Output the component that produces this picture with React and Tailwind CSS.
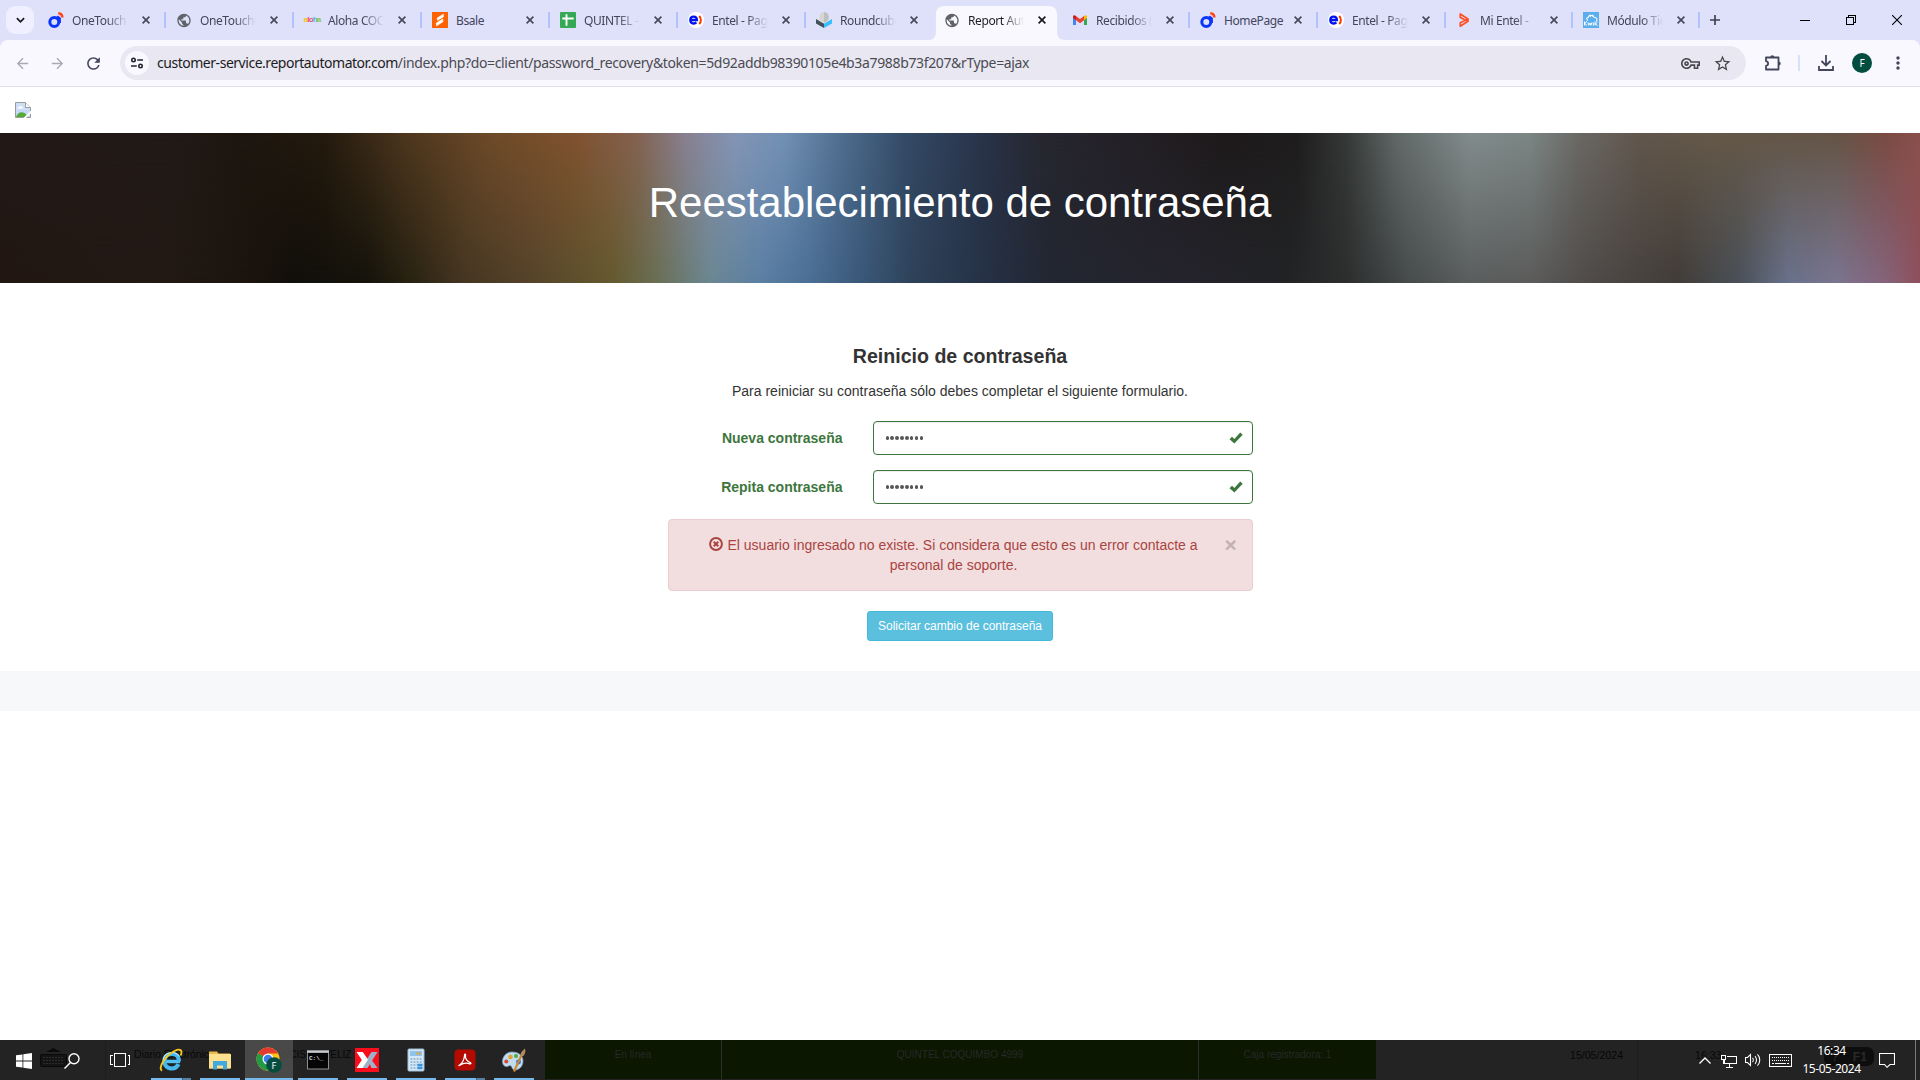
import React from "react";
import {
  MdPublic,
  MdArrowBack,
  MdArrowForward,
  MdRefresh,
  MdStarBorder,
  MdMoreVert,
  MdOutlineVpnKey,
} from "react-icons/md";

/* ---------- favicons ---------- */

const OneTouchIcon = () => (
  <svg viewBox="0 0 16 16" className="size-4">
    <circle cx="6.3" cy="10" r="4.5" fill="none" stroke="#0a36ff" strokeWidth="3" />
    <path d="M9.2 4.2l2.6 2.4V11" fill="none" stroke="#0a36ff" strokeWidth="2.2" />
    <path d="M10.3 1.3c2.4.1 4 1.700 4 4.300" fill="none" stroke="#ff4415" strokeWidth="2.600" />
  </svg>
);

const GlobeIcon = () => <MdPublic className="size-[17px] text-[#5f6368]" />;

const AlohaIcon = () => (
  <span className="flex w-4 justify-center font-['Liberation_Sans'] text-[8px] font-bold leading-none tracking-[-0.9px]">
    <span className="text-[#f5c400]">a</span>
    <span className="text-[#ee3d8f]">l</span>
    <span className="text-[#e8506a]">o</span>
    <span className="text-[#36b5d8]">h</span>
    <span className="text-[#8cc63f]">a</span>
  </span>
);

const BsaleIcon = () => (
  <svg viewBox="0 0 16 16" className="size-4">
    <rect width="16" height="16" fill="#ff6200" />
    <path d="M5.200 6.100L11.300 2.300v2.600L5.600 8.200zM4.200 11.200l6.500-4.100.3 2.500-6.300 4.200z" fill="#fff" stroke="#fff" strokeWidth=".8" strokeLinejoin="round" />
  </svg>
);

const SheetIcon = () => (
  <svg viewBox="0 0 16 16" className="size-4">
    <rect width="16" height="16" rx="1" fill="#34a853" />
    <path d="M2.300 6.500h11.400M6.500 2.300v11.400" stroke="#fff" strokeWidth="1.900" />
  </svg>
);

const EntelIcon = () => (
  <svg viewBox="0 0 16 16" className="size-4">
    <circle cx="8" cy="8" r="8" fill="#fff" />
    <path d="M2.300 8h6.600c0-4.500-6.600-4.500-6.600 0 0 4 4.400 4.200 6.100 2.400" fill="none" stroke="#0014f0" strokeWidth="2.300" />
    <path d="M11.300 4c2 2.300 2 5.700 0 8" fill="none" stroke="#ff3d00" strokeWidth="2.100" />
  </svg>
);

const RoundcubeIcon = () => (
  <svg viewBox="0 0 16 16" className="size-4">
    <path d="M0 7l8 4.500V16L0 11.400z" fill="#43515a" />
    <path d="M16 7l-8 4.500V16l8-4.600z" fill="#37beff" />
    <path d="M3 5.500v3.200l5 2.800 5-2.800V5.500z" fill="#e5e5e5" />
    <ellipse cx="8" cy="5.200" rx="4.800" ry="5.200" fill="#d5d5d5" />
    <path d="M8 0a4.800 5.200 0 0 1 0 10.400z" fill="#bfbfbf" />
  </svg>
);

const GmailIcon = () => (
  <svg viewBox="0 0 16 16" className="size-4">
    <path d="M1 4.500v8.600h3V7.300z" fill="#4285f4" />
    <path d="M12 7.300v5.800h3V4.500z" fill="#34a853" />
    <path d="M4 4v4.200l4 3 4-3V4L8 7z" fill="#ea4335" />
    <path d="M1 4.500V6l3 2.200V4C2.500 2.500 1 3.300 1 4.500z" fill="#c5221f" />
    <path d="M15 4.500V6l-3 2.200V4c1.500-1.500 3-.7 3 .5z" fill="#fbbc04" />
  </svg>
);

const MiEntelIcon = () => (
  <svg viewBox="0 0 16 16" className="size-4" fill="none" stroke="#ff4f23" strokeWidth="1.700" strokeLinejoin="round">
    <path d="M4.300 2v3.400L12 9.200V7L4.300 2zM4.300 14.200v-3.400L12 7v2.300z" />
  </svg>
);

const KwikIcon = () => (
  <svg viewBox="0 0 16 16" className="size-4">
    <rect width="16" height="16" fill="#5aaeee" />
    <path d="M5 8.500C3 7.500 3.500 5 5.500 5.200 6 2.700 9 2.700 9.800 4.500M6 3l2 1.500M9.500 2.800l1.500 2.500c3 0 4 3 2 4.200" fill="none" stroke="#fff" strokeWidth="1.100" />
    <path d="M1.500 9.500v4M4 9.500l-2.300 2L4 13.500M5 10.500l.8 2.800L7 11l1 2.300.9-2.800M10.300 10.500v3M12 9.500v4M14.500 10.300L12.300 12l2.300 1.500" fill="none" stroke="#fff" strokeWidth="1" />
  </svg>
);

/* ---------- tab strip ---------- */

const CloseX = ({ active }) => (
  <svg viewBox="0 0 8 8" className={active ? "size-2 text-[#16171c]" : "size-2 text-[#45485a]"}>
    <path d="M.6.600l6.800 6.800M7.400.6L.6 7.400" stroke="currentColor" strokeWidth="1.600" />
  </svg>
);

const tabs = [
  { icon: OneTouchIcon, title: "OneTouch" },
  { icon: GlobeIcon, title: "OneTouchC" },
  { icon: AlohaIcon, title: "Aloha COC" },
  { icon: BsaleIcon, title: "Bsale", whole: true },
  { icon: SheetIcon, title: "QUINTEL -" },
  { icon: EntelIcon, title: "Entel - Pag" },
  { icon: RoundcubeIcon, title: "Roundcube" },
  { icon: GlobeIcon, title: "Report Aut", active: true },
  { icon: GmailIcon, title: "Recibidos (" },
  { icon: OneTouchIcon, title: "HomePage", whole: true },
  { icon: EntelIcon, title: "Entel - Pag" },
  { icon: MiEntelIcon, title: "Mi Entel -", narrow: true },
  { icon: KwikIcon, title: "Módulo Tie", narrow: true },
];

function Tab({ tab, divider }) {
  const Icon = tab.icon;
  return (
    <div className={"relative flex h-10 shrink-0 items-center pl-[11px] " + (tab.narrow ? "w-[127px]" : "w-32")}>
      {tab.active && (
        <svg viewBox="0 0 140 34" className="absolute -left-[5px] bottom-0 h-[34px] w-[138px]" preserveAspectRatio="none">
          <path d="M0 34c6 0 8-3 8-9V9c0-6 3-9 9-9h105c6 0 9 3 9 9v16c0 6 2 9 9 9z" fill="#f9f8fe" />
        </svg>
      )}
      <span className="relative flex w-4 justify-center">
        <Icon />
      </span>
      <span
        className={
          "relative ml-2 overflow-hidden whitespace-nowrap pt-px text-[12px] leading-5 tracking-[-0.4px] " +
          (tab.whole ? "w-[62px] " : "w-[56px] [mask-image:linear-gradient(to_right,black_62%,transparent)] ") +
          (tab.active ? "text-[#1d1e24]" : "text-[#43465a]")
        }
      >
        {tab.title}
      </span>
      <span className="absolute left-[105px] top-4">
        <CloseX active={tab.active} />
      </span>
      {divider && <span className="absolute right-[-1px] top-3 h-4 w-[2px] bg-[#b3c2fc]" />}
    </div>
  );
}

function TabStrip() {
  return (
    <div className="flex h-10 bg-[#dfe0fa]">
      <div className="flex w-[37px] shrink-0 items-center">
        <div className="ml-1.5 flex size-7 items-center justify-center rounded-[9px] bg-[#efefff]">
          <svg viewBox="0 0 10 6" className="h-[6px] w-[9px]">
            <path d="M1 1l4 4 4-4" fill="none" stroke="#16171c" strokeWidth="1.900" />
          </svg>
        </div>
      </div>
      {tabs.map((t, i) => (
        <Tab key={i} tab={t} divider={i !== 6 && i !== 7} />
      ))}
      <div className="flex w-8 items-center justify-center">
        <svg viewBox="0 0 10 10" className="size-[10px]">
          <path d="M5 0v10M0 5h10" stroke="#3f4254" strokeWidth="1.700" />
        </svg>
      </div>
      <div className="ml-auto flex shrink-0">
        <div className="flex w-[46px] items-center justify-center">
          <span className="h-px w-[10px] bg-black" />
        </div>
        <div className="flex w-[46px] items-center justify-center">
          <svg viewBox="0 0 10 10" className="size-[10px]" fill="none" stroke="#000" shapeRendering="crispEdges">
            <path d="M.5 2.500h7v7h-7zM2.500 2.500v-2h7v7h-2" />
          </svg>
        </div>
        <div className="flex w-[46px] items-center justify-center">
          <svg viewBox="0 0 10 10" className="size-[10px]">
            <path d="M0 0l10 10M10 0L0 10" stroke="#000" strokeWidth="1.100" />
          </svg>
        </div>
      </div>
    </div>
  );
}

/* ---------- toolbar ---------- */

function Toolbar() {
  return (
    <div className="bg-[#dfe0fa]">
      <div className="flex h-[47px] items-center rounded-t-[8px] border-b border-[#dfdfea] bg-[#f9f8fe]">
        <div className="flex w-[120px] shrink-0 items-center">
          <MdArrowBack className="ml-[14px] size-[17px] text-[#a9aab4]" />
          <MdArrowForward className="ml-[18px] size-[17px] text-[#a9aab4]" />
          <MdRefresh className="ml-[18px] size-[19px] text-[#43465a]" />
        </div>
        <div className="flex h-[34px] w-[1626px] shrink-0 items-center rounded-full bg-[#e9e8f2] pl-[5px] pr-[14px]">
          <div className="flex size-6 items-center justify-center rounded-full bg-[#f9f8fe]">
            <svg viewBox="0 0 12 12" className="size-3" fill="none" stroke="#22242c" strokeWidth="1.600">
              <circle cx="2.500" cy="3" r="1.700" />
              <path d="M6.200 3H12M0 9h5.800" />
              <circle cx="9.500" cy="9" r="1.700" />
            </svg>
          </div>
          <span className="ml-2 whitespace-nowrap text-[14px] leading-5 tracking-[-0.355px] text-[#4b4b53]">
            <span className="tracking-[-0.47px] text-[#1c1c22]">customer-service.reportautomator.com</span>
            /index.php?do=client/password_recovery&amp;token=5d92addb98390105e4b3a7988b73f207&amp;rType=ajax
          </span>
          <MdOutlineVpnKey className="ml-auto size-[19px] text-[#47474f]" />
          <MdStarBorder className="ml-[13px] size-[19px] text-[#47474f]" />
        </div>
        <svg viewBox="0 0 18 18" className="ml-[18px] size-[18px] shrink-0" fill="none" stroke="#43465a" strokeWidth="1.800">
          <path d="M2 3.500h12.500v12H2v-3.700c2.800-.5 2.800-4.100 0-4.600z" strokeLinejoin="round" />
          <path d="M6.300 3.300a2 2 0 0 1 4 0zM14.700 7.500a2 2 0 0 1 0 4z" fill="#43465a" stroke="none" />
        </svg>
        <span className="ml-4 h-4 w-[2px] bg-[#d9e0fd]" />
        <svg viewBox="0 0 16 16" className="ml-[18px] size-4" fill="none" stroke="#43465a" strokeWidth="1.800">
          <path d="M8 0v10M3.500 6L8 10.500 12.500 6M1 11v4h14v-4" />
        </svg>
        <span className="ml-[18px] flex size-5 items-center justify-center rounded-full bg-[#014d40] text-[10px] text-white">F</span>
        <MdMoreVert className="ml-[16px] size-5 text-[#43465a]" />
      </div>
    </div>
  );
}

/* ---------- page ---------- */

const bannerTop = [
  [0, "#231916"], [130, "#221a17"], [200, "#1d160f"], [265, "#241a0e"], [330, "#4c361e"], [400, "#6d4a28"],
  [470, "#80522f"], [520, "#846250"], [560, "#888090"], [600, "#8495b6"], [640, "#7291b4"], [690, "#4d6c8d"],
  [740, "#344a66"], [800, "#29344a"], [850, "#262730"], [900, "#252229"], [1000, "#1e1a1b"], [1060, "#1f1d1e"],
  [1100, "#363937"], [1140, "#606867"], [1200, "#828c8c"], [1250, "#7b8685"], [1290, "#6a6864"], [1340, "#61564c"],
  [1400, "#645848"], [1500, "#645445"], [1540, "#7a4b43"], [1568, "#8b504c"],
];
const bannerBottom = [
  [0, "#211611"], [130, "#231914"], [200, "#1c140e"], [240, "#110f0a"], [300, "#14130b"], [340, "#2b2413"],
  [380, "#453622"], [430, "#54422a"], [500, "#64592e"], [540, "#6a7159"], [580, "#6b8792"], [620, "#5b7fa3"],
  [660, "#4b6f95"], [700, "#3b597a"], [750, "#2d4056"], [800, "#263247"], [860, "#222631"], [960, "#25242d"],
  [1050, "#212325"], [1100, "#2c2e2e"], [1150, "#474b4b"], [1200, "#5a5d5d"], [1250, "#5b5b5a"], [1300, "#4e4a48"],
  [1370, "#413c38"], [1420, "#4a5058"], [1460, "#68718b"], [1500, "#7a7590"], [1540, "#85637a"], [1568, "#8e4f5c"],
];
const toGradient = (stops) =>
  `linear-gradient(to right, ${stops.map(([x, c]) => `${c} ${((x / 1568) * 100).toFixed(2)}%`).join(", ")})`;

function Banner() {
  return (
    <div className="relative flex h-[150px] shrink-0 items-center justify-center" style={{ backgroundImage: toGradient(bannerTop) }}>
      <div
        className="absolute inset-0 [mask-image:linear-gradient(to_bottom,transparent,black)]"
        style={{ backgroundImage: toGradient(bannerBottom) }}
      />
      <h1 className="relative pb-[10px] text-[42px] leading-[46px] tracking-[-0.03px] text-white">Reestablecimiento de contraseña</h1>
    </div>
  );
}

function PasswordRow({ label }) {
  return (
    <div className="flex h-[34px] items-center">
      <label className="w-[190px] pr-[15px] text-right text-[14px] font-bold leading-5 text-[#3c763d]">{label}</label>
      <div className="ml-[15px] flex h-[34px] w-[380px] items-center justify-between rounded-[4px] border border-[#3c763d] bg-white pl-3 pr-[9px] shadow-[inset_0_1px_1px_rgba(0,0,0,0.075)]">
        <span className="flex gap-[1.4px]">
          {Array.from({ length: 8 }, (_, i) => (
            <span key={i} className="size-[3.500px] rounded-full bg-[#555]" />
          ))}
        </span>
        <svg viewBox="0 0 14 12" className="h-3 w-[14px]">
          <path d="M.5 7.200L3 4.700l2.400 2.200L11.200.6l2.500 2.200-8.300 8.800z" fill="#3c763d" />
        </svg>
      </div>
    </div>
  );
}

function Page() {
  return (
    <div className="flex h-[953px] flex-col bg-white font-['Liberation_Sans',Arial,sans-serif] text-[#333]">
      <div className="h-[46px] shrink-0 pl-[15px] pt-[15px]">
        <svg viewBox="0 0 16 16" className="size-4">
          <path d="M.5.5h10l5 5v10H.5z" fill="#c6d8f6" stroke="#9a9a9a" />
          <path d="M1 1h9.500v5H15v2H1z" fill="#cfdff8" />
          <path d="M2.500 6.500c0-1.500 1.200-1.500 1.500-1.500.5-1.500 2.500-1.500 3 0 1.300 0 1.500 1.500.5 1.500z" fill="#fff" />
          <path d="M1 15c2-5.500 8-7 12 0z" fill="#57a83a" />
          <path d="M10.500.5v5h5" fill="#fff" stroke="#9a9a9a" />
          <path d="M16 8.500L8.500 16H11l5-4.500z" fill="#fff" />
        </svg>
      </div>
      <Banner />
      <div className="flex h-[388px] shrink-0 flex-col items-center pt-[61px]">
        <h2 className="text-[19.6px] font-bold leading-6">Reinicio de contraseña</h2>
        <p className="mt-[13px] text-[14px] leading-5">Para reiniciar su contraseña sólo debes completar el siguiente formulario.</p>
        <div className="mt-5 flex w-[585px] flex-col gap-[15px]">
          <PasswordRow label="Nueva contraseña" />
          <PasswordRow label="Repita contraseña" />
          <div className="flex h-[72px] rounded-[4px] border border-[#ebccd1] bg-[#f2dede] pl-[38px] pt-[15px] text-[#a94442]">
            <p className="w-[494px] text-center text-[14px] leading-5">
              <svg viewBox="0 0 14 14" className="mr-1 inline size-[14px] align-[-1px]" fill="none" stroke="#a94442">
                <circle cx="7" cy="7" r="5.900" strokeWidth="2" />
                <path d="M4.700 4.700l4.600 4.600M9.300 4.700L4.700 9.300" strokeWidth="2" />
              </svg>
              El usuario ingresado no existe. Si considera que esto es un error contacte a<br />
              personal de soporte.
            </p>
            <span className="ml-6 -mt-px text-[21px] font-bold leading-[21px] text-[#c2b1b1]">×</span>
          </div>
        </div>
        <button className="mt-5 h-[30px] w-[186px] rounded-[3px] border border-[#46b8da] bg-[#5bc0de] text-[12px] leading-[18px] text-white">
          Solicitar cambio de contraseña
        </button>
      </div>
      <div className="h-10 shrink-0 bg-[#f7f8fa]" />
    </div>
  );
}

/* ---------- taskbar ---------- */

const IEIcon = () => (
  <svg viewBox="0 0 24 24" className="size-6">
    <path d="M5 13.500h16" stroke="#52c1f3" strokeWidth="3.400" />
    <path d="M20 13.500C20 3.500 5.500 3.500 5.500 13.500c0 8.500 11 9 14 2.700" fill="none" stroke="#45b8ee" strokeWidth="4.200" />
    <path d="M4.200 13C4.200 3 17 2.500 20.500 8.500" fill="none" stroke="#b5e7fb" strokeWidth="1.200" />
    <path d="M3 22.800C-1.500 20 6.500 7.500 15.500 3c6-3 8.500-.5 6 4.500" fill="none" stroke="#f8c81c" strokeWidth="1.900" />
  </svg>
);
const FolderIcon = () => (
  <svg viewBox="0 0 24 24" className="size-6">
    <path d="M1 3.500h8l1.500 2H22v15H1z" fill="#e9b949" />
    <path d="M1 6h22v14.500H1z" fill="#fde08f" />
    <path d="M5 13h14v8.500h-4V17.500H9v4H5z" fill="#3fa9e0" />
  </svg>
);
const ChromeIcon = () => (
  <svg viewBox="0 0 26 26" className="size-[26px]">
    <circle cx="12" cy="12" r="11.500" fill="#fbc116" />
    <path d="M12 12L2 6.300A11.500 11.500 0 0 1 22 6.500H12z" fill="#e33b2e" />
    <path d="M12 12L2 6.300a11.500 11.500 0 0 0 9 17.200l5-9z" fill="#229a46" />
    <circle cx="12" cy="12" r="5.500" fill="#fff" />
    <circle cx="12" cy="12" r="4.300" fill="#3b7ded" />
    <circle cx="18" cy="18" r="7.800" fill="#064d40" />
    <text x="18" y="21.500" fontSize="9.500" fill="#fff" textAnchor="middle" fontFamily="Open Sans">F</text>
  </svg>
);
const CmdIcon = () => (
  <svg viewBox="0 0 24 24" className="size-6">
    <rect x="1" y="2.500" width="22" height="19" fill="#8b8f92" />
    <rect x="2" y="5" width="20" height="15.500" fill="#050505" />
    <rect x="1" y="2.500" width="22" height="2" fill="#c9cdd0" />
    <text x="3" y="12" fontSize="6" fontWeight="bold" fill="#ddd" fontFamily="Liberation Mono">C:\_</text>
  </svg>
);
const XIcon = () => (
  <svg viewBox="0 0 24 24" className="size-6">
    <rect width="24" height="24" fill="#fb0d1b" />
    <path d="M22.500 4h-6L12 11l-5 9h5.500z" fill="#9fb1c9" />
    <path d="M13 12l3.500 8h6L16 11z" fill="#9fb1c9" />
    <path d="M1.500 4h6.300L13 11.500 7.500 20h-6l5.300-8z" fill="#fff" />
  </svg>
);
const CalcIcon = () => (
  <svg viewBox="0 0 24 24" className="size-6">
    <rect x="4" y="1" width="16" height="22" rx="1" fill="#d6e8f5" stroke="#9cc0da" />
    <rect x="6" y="3" width="12" height="5" fill="#8fc3ea" />
    <path d="M12.500 5.500h4" stroke="#e6a23c" strokeWidth="2.500" strokeDasharray="1.600 .8" />
    <path d="M6.500 11h11M6.500 14h11M6.500 17h11M6.500 20h11" stroke="#7fa9c9" strokeWidth="1.500" strokeDasharray="1.800 1.300" />
    <path d="M13.500 17h5M13.500 20h5" stroke="#3c94da" strokeWidth="2.400" />
  </svg>
);
const AcrobatIcon = () => (
  <svg viewBox="0 0 24 24" className="size-6">
    <rect x="1.500" y="1.500" width="21" height="21" rx="4" fill="#b30b00" />
    <path d="M6.300 17.200c2.600-1.700 5-6 5.300-10.200.1-1.500 1.300-1 .9.600-.6 3 2 6.200 4.700 7.100 1.200.5.700 1.400-.4 1.100-3-1-6.700-.7-9.600 1.100-1.200.8-1.700.8-.9.300z" fill="none" stroke="#fff" strokeWidth="1.300" />
  </svg>
);
const PaintIcon = () => (
  <svg viewBox="0 0 24 24" className="size-6">
    <path d="M10 4C4 4 .5 9 .5 13.500.5 18 4 19.500 6.500 18c2-1 3 0 3.500 1.800 1 3 5 2.700 8 .2 3-2.500 3.500-7 2.500-10S16 4 10 4z" fill="#bfdcf0" stroke="#7fa6c2" strokeWidth=".7" />
    <circle cx="8.500" cy="9" r="2.300" fill="#e8a02c" />
    <circle cx="4.300" cy="13.500" r="2" fill="#d94832" />
    <circle cx="14" cy="8" r="2" fill="#49ad3c" />
    <circle cx="16.500" cy="14" r="2.400" fill="#2d6cc9" />
    <path d="M12 23.500L20 6" stroke="#d08736" strokeWidth="2.200" />
    <path d="M18.700 7.500C18.500 4 21 2.500 23 .5c1 3 0 6-2 7.800z" fill="#b58a5c" />
  </svg>
);

const apps = [
  { icon: IEIcon, stacked: true },
  { icon: FolderIcon },
  { icon: ChromeIcon, active: true },
  { icon: CmdIcon },
  { icon: XIcon },
  { icon: CalcIcon },
  { icon: AcrobatIcon, stacked: true },
  { icon: PaintIcon },
];

/* Window row that shows faintly through the translucent taskbar */
function BackRow() {
  return (
    <div className="absolute inset-0 flex font-['Liberation_Sans',Arial,sans-serif] text-[10.600px] leading-[14px] text-[#070707]">
      <div className="flex w-[106px] shrink-0 border-r border-[#1d1d1d] pl-10 pt-2">
        <svg viewBox="0 0 27 20" className="h-5 w-[27px]">
          <path d="M6 4L13.500 0 21 4z" fill="#0a0a0a" />
          <rect x=".5" y="6.500" width="26" height="12" rx="1" fill="#141414" stroke="#090909" />
          <path d="M3 9.500h21M3 12.500h21M3 15.500h21" stroke="#2c2c2c" strokeDasharray="2 1" />
        </svg>
      </div>
      <span className="w-[112px] shrink-0 whitespace-nowrap pl-7 pt-2 text-[10.300px]">Diario Electrónico</span>
      <span className="w-[327px] shrink-0 whitespace-nowrap pl-[44px] pt-2 text-[10px]">FRANCISCO VELIZ</span>
      <div className="flex h-[39px] w-[831px] shrink-0 bg-[#0b1700] text-center text-[10px] text-[#26292a]">
        <span className="w-[177px] border-r border-[#2b302b] pt-2">En línea</span>
        <span className="w-[477px] border-r border-[#2b302b] pt-2">QUINTEL COQUIMBO 4999</span>
        <span className="w-[177px] pt-2">Caja registradora: 1</span>
      </div>
      <span className="w-[261px] shrink-0 pl-[194px] pt-2">15/05/2024</span>
      <span className="w-[142px] shrink-0 border-l border-[#1d1d1d] pl-[57px] pt-2">16:33</span>
      <span className="ml-[45px] mt-[7px] flex h-[19px] w-[50px] items-center justify-around rounded-[7px] bg-[#0d0d0d] text-[12px] font-bold text-[#2a2a2a]">
        <span>?</span>
        <span>F1</span>
      </span>
    </div>
  );
}

function Taskbar() {
  return (
    <div className="relative h-10 bg-[#232323]">
      <BackRow />
      <div className="relative flex h-10">
        <div className="flex w-12 items-center justify-center">
          <svg viewBox="0 0 16 16" className="mt-[1px] size-4" fill="#fff">
            <path d="M0 2.300L6.500 1.400v6.200H0zM7.300 1.300L16 0v7.600H7.300zM0 8.400h6.500v6.200L0 13.700zM7.300 8.400H16V16l-8.700-1.300z" />
          </svg>
        </div>
        <div className="flex w-12 items-center justify-center">
          <svg viewBox="0 0 16 16" className="mt-[1px] size-4" fill="none" stroke="#fff" strokeWidth="1.400">
            <circle cx="10" cy="5.800" r="5" />
            <path d="M6.500 9.500L.5 15.500" />
          </svg>
        </div>
        <div className="flex w-[48px] items-center justify-center">
          <svg viewBox="0 0 20 14" className="h-[14px] w-5" fill="none" stroke="#fff" shapeRendering="crispEdges">
            <path d="M4.500.5h11v13h-11zM2.500 2.500h-2v9h2M17.500 2.500h2v9h-2" />
          </svg>
        </div>
        <div className="ml-[3px] flex gap-px">
          {apps.map(({ icon: Icon, active, stacked }, i) => (
            <div key={i} className={active ? "flex h-10 w-12 flex-col items-center bg-[#505050]/85" : "flex h-10 w-12 flex-col items-center"}>
              <div className="flex h-[38px] items-center pt-[2px]">
                <Icon />
              </div>
              <div className={active ? "flex h-[2px] w-12 bg-[#76b9ed]" : "flex h-[2px] w-10 justify-end bg-[#76b9ed]"}>
                {stacked && <span className="h-[2px] w-[9px] border-l border-[#3e6482] bg-[#567fa0]" />}
              </div>
            </div>
          ))}
        </div>
        <div className="ml-auto flex items-center text-white">
          <svg viewBox="0 0 12 7" className="h-[7px] w-3" fill="none" stroke="#fff" strokeWidth="1.300">
            <path d="M.5 6.500L6 1l5.500 5.500" />
          </svg>
          <svg viewBox="0 0 16 14" className="ml-[10px] mt-[1px] h-[14px] w-4" fill="none" stroke="#fff" shapeRendering="crispEdges">
            <path d="M5.500 2.500h10v7h-12v-4M8.500 10v3M5 13.500h7M.5 1.500h4v4h-4zM2.500 5.500v4h2" />
          </svg>
          <svg viewBox="0 0 16 14" className="ml-2 h-[14px] w-4" fill="none" stroke="#fff" strokeWidth="1.100">
            <path d="M.5 4.500h2l3-3v11l-3-3h-2zM7.500 5c1 1 1 3 0 4M10 3.200c2 2 2 5.600 0 7.600M12.500 1.300c3 3 3 8.400 0 11.400" />
          </svg>
          <svg viewBox="0 0 23 13" className="ml-2 h-[13px] w-[23px]" fill="none" stroke="#fff">
            <rect x=".5" y=".5" width="22" height="12" />
            <path d="M3 3.500h17M3 6.500h17" strokeDasharray="1 1" />
            <path d="M3 9.500h2M6 9.500h11M18 9.500h2" />
          </svg>
          <div className="ml-[3px] flex w-[73px] flex-col items-center text-[12px] leading-[18px] tracking-[-0.45px]">
            <span>16:34</span>
            <span>15-05-2024</span>
          </div>
          <svg viewBox="0 0 16 16" className="ml-[11px] size-4" fill="none" stroke="#fff" strokeWidth="1.100">
            <path d="M.5 1.500h15v11h-4.500L8 15.300l-2.500-2.800h-5z" />
          </svg>
          <span className="ml-5 h-10 w-px bg-[#7a7a7a]" />
          <span className="w-1" />
        </div>
      </div>
    </div>
  );
}

export default function App() {
  return (
    <div className="h-[1080px] w-[1920px] overflow-hidden bg-white font-['Noto_Sans','Open_Sans',sans-serif]">
      <TabStrip />
      <Toolbar />
      <Page />
      <Taskbar />
    </div>
  );
}
